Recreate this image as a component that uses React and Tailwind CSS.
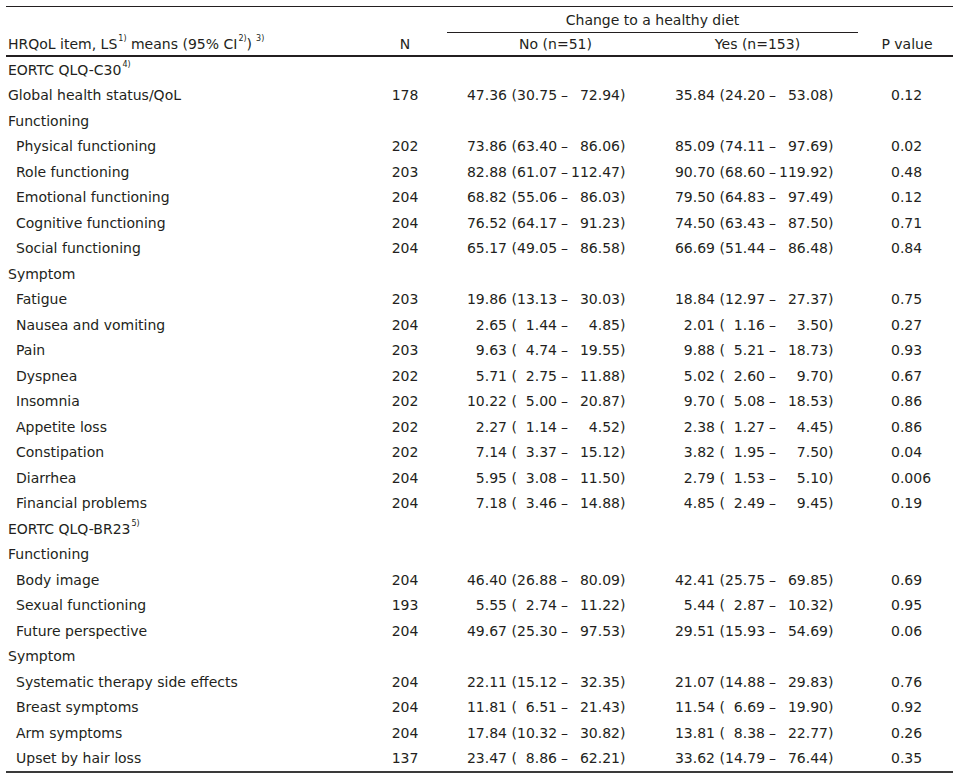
const rows = [
  { label: 'EORTC QLQ-C30', sup: '4)', head: true },
  { label: 'Global health status/QoL', n: 178, no: ['47.36', '30.75', '72.94'], yes: ['35.84', '24.20', '53.08'], p: '0.12' },
  { label: 'Functioning', head: true },
  { label: 'Physical functioning', sub: true, n: 202, no: ['73.86', '63.40', '86.06'], yes: ['85.09', '74.11', '97.69'], p: '0.02' },
  { label: 'Role functioning', sub: true, n: 203, no: ['82.88', '61.07', '112.47'], yes: ['90.70', '68.60', '119.92'], p: '0.48' },
  { label: 'Emotional functioning', sub: true, n: 204, no: ['68.82', '55.06', '86.03'], yes: ['79.50', '64.83', '97.49'], p: '0.12' },
  { label: 'Cognitive functioning', sub: true, n: 204, no: ['76.52', '64.17', '91.23'], yes: ['74.50', '63.43', '87.50'], p: '0.71' },
  { label: 'Social functioning', sub: true, n: 204, no: ['65.17', '49.05', '86.58'], yes: ['66.69', '51.44', '86.48'], p: '0.84' },
  { label: 'Symptom', head: true },
  { label: 'Fatigue', sub: true, n: 203, no: ['19.86', '13.13', '30.03'], yes: ['18.84', '12.97', '27.37'], p: '0.75' },
  { label: 'Nausea and vomiting', sub: true, n: 204, no: ['2.65', '1.44', '4.85'], yes: ['2.01', '1.16', '3.50'], p: '0.27' },
  { label: 'Pain', sub: true, n: 203, no: ['9.63', '4.74', '19.55'], yes: ['9.88', '5.21', '18.73'], p: '0.93' },
  { label: 'Dyspnea', sub: true, n: 202, no: ['5.71', '2.75', '11.88'], yes: ['5.02', '2.60', '9.70'], p: '0.67' },
  { label: 'Insomnia', sub: true, n: 202, no: ['10.22', '5.00', '20.87'], yes: ['9.70', '5.08', '18.53'], p: '0.86' },
  { label: 'Appetite loss', sub: true, n: 202, no: ['2.27', '1.14', '4.52'], yes: ['2.38', '1.27', '4.45'], p: '0.86' },
  { label: 'Constipation', sub: true, n: 202, no: ['7.14', '3.37', '15.12'], yes: ['3.82', '1.95', '7.50'], p: '0.04' },
  { label: 'Diarrhea', sub: true, n: 204, no: ['5.95', '3.08', '11.50'], yes: ['2.79', '1.53', '5.10'], p: '0.006' },
  { label: 'Financial problems', sub: true, n: 204, no: ['7.18', '3.46', '14.88'], yes: ['4.85', '2.49', '9.45'], p: '0.19' },
  { label: 'EORTC QLQ-BR23', sup: '5)', head: true },
  { label: 'Functioning', head: true },
  { label: 'Body image', sub: true, n: 204, no: ['46.40', '26.88', '80.09'], yes: ['42.41', '25.75', '69.85'], p: '0.69' },
  { label: 'Sexual functioning', sub: true, n: 193, no: ['5.55', '2.74', '11.22'], yes: ['5.44', '2.87', '10.32'], p: '0.95' },
  { label: 'Future perspective', sub: true, n: 204, no: ['49.67', '25.30', '97.53'], yes: ['29.51', '15.93', '54.69'], p: '0.06' },
  { label: 'Symptom', head: true },
  { label: 'Systematic therapy side effects', sub: true, n: 204, no: ['22.11', '15.12', '32.35'], yes: ['21.07', '14.88', '29.83'], p: '0.76' },
  { label: 'Breast symptoms', sub: true, n: 204, no: ['11.81', '6.51', '21.43'], yes: ['11.54', '6.69', '19.90'], p: '0.92' },
  { label: 'Arm symptoms', sub: true, n: 204, no: ['17.84', '10.32', '30.82'], yes: ['13.81', '8.38', '22.77'], p: '0.26' },
  { label: 'Upset by hair loss', sub: true, n: 137, no: ['23.47', '8.86', '62.21'], yes: ['33.62', '14.79', '76.44'], p: '0.35' },
];

const cols = 'grid grid-cols-[364px_70px_217px_201px_95px]';

// mean (lower – upper), pieces right-aligned so the brackets and dashes line up
const Ci = ({ v }) => (
  <div className="flex whitespace-pre">
    <span className="w-[50px] text-right">{v[0]}</span>
    <span className="w-[10px] text-right">(</span>
    <span className="w-[40px] text-right">{v[1]}</span>
    <span className="w-[11px] text-right">–</span>
    <span className="w-[52px] text-right">{v[2]}</span>
    <span>)</span>
  </div>
);

const Sup = ({ children, gap }) => (
  <span className={(gap ? 'ml-[4px] ' : 'ml-[1px] ') + 'inline-block align-top text-[8px] leading-none -mt-[2px]'}>{children}</span>
);

export default function App() {
  return (
    <div className="min-h-screen bg-white pt-[6px] pl-[6px] text-[14px] leading-none text-[#231f20]" style={{ fontFamily: '"DejaVu Sans", sans-serif' }}>
      <div className="w-[947px] border-t border-[#231f20] border-b-2 border-b-[#3a3a3a]">
        {/* header */}
        <div className={cols + ' h-[26px] items-stretch'}>
          <div />
          <div />
          <div className="col-span-2 flex flex-col">
            <div className="flex-1 flex items-center justify-center pl-[7px] pt-[1px]">Change to a healthy diet</div>
            <div className="ml-[7px] h-px bg-[#231f20]" />
          </div>
          <div />
        </div>
        <div className={cols + ' h-[24px] items-center border-b-2 border-[#231f20]'}>
          <div className="pl-[2px]">
            HRQoL item, LS<Sup>1)</Sup> means (95% CI<Sup>2)</Sup>)<Sup gap>3)</Sup>
          </div>
          <div className="text-center">N</div>
          <div className="text-center pl-[14px]">No (n=51)</div>
          <div className="text-center">Yes (n=153)</div>
          <div className="text-center pl-[3px]">P value</div>
        </div>

        {/* body */}
        {rows.map((r, i) => (
          <div key={i} className={cols + ' h-[25.5px] items-center'}>
            <div className={r.sub ? 'pl-[10px]' : 'pl-[2px]'}>
              {r.label}
              {r.sup && <Sup>{r.sup}</Sup>}
            </div>
            <div className="text-center">{r.n}</div>
            <div className="pl-[17px]">{r.no && <Ci v={r.no} />}</div>
            <div className="pl-[8px]">{r.yes && <Ci v={r.yes} />}</div>
            <div className="pl-[33px]">{r.p}</div>
          </div>
        ))}
      </div>
    </div>
  );
}
